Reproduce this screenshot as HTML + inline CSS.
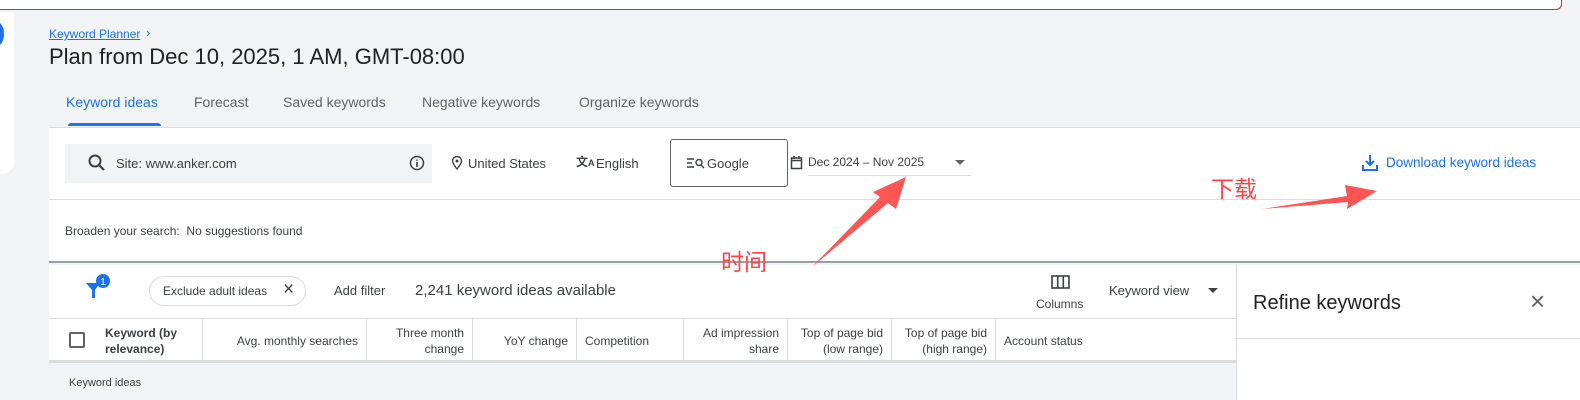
<!DOCTYPE html>
<html><head><meta charset="utf-8"><style>
*{box-sizing:border-box;margin:0;padding:0}
body{width:1580px;height:400px;background:#f1f3f4;font-family:"Liberation Sans",Arial,sans-serif;color:#3c4043;position:relative;overflow:hidden;font-size:13px}
.a{position:absolute;white-space:nowrap}
.th{position:absolute;top:319px;height:44px;border-right:1px solid #dadce0;font-size:12px;line-height:16px;padding:6px 8px;display:flex;align-items:center}
.r{justify-content:flex-end;text-align:right}
</style></head><body>
<div class="a" style="left:0;top:0;width:1562px;height:10px;background:#fff;border-bottom:1px solid #c53929;border-right:1px solid #c53929;border-bottom-right-radius:6px"></div>
<div class="a" style="left:0;top:12px;width:14px;height:162px;background:#fff;border-bottom-right-radius:12px"></div>
<div class="a" style="left:-10px;top:22px;width:14px;height:24px;border-radius:50%;background:#1a73e8"></div>

<div class="a" style="left:49px;top:27px;font-size:12px;color:#1a73e8;text-decoration:underline">Keyword Planner</div>
<div class="a" style="left:146px;top:25px;font-size:13px;color:#1a73e8">›</div>
<div class="a" style="left:49px;top:44px;font-size:22px;color:#202124">Plan from Dec 10, 2025, 1 AM, GMT-08:00</div>
<div class="a" style="left:66px;top:94px;font-size:14px;color:#1a73e8">Keyword ideas</div>
<div class="a" style="left:194px;top:94px;font-size:14px;color:#5f6368">Forecast</div>
<div class="a" style="left:283px;top:94px;font-size:14px;color:#5f6368">Saved keywords</div>
<div class="a" style="left:422px;top:94px;font-size:14px;color:#5f6368">Negative keywords</div>
<div class="a" style="left:579px;top:94px;font-size:14px;color:#5f6368">Organize keywords</div>
<div class="a" style="left:68px;top:123px;width:93px;height:3px;background:#1a73e8;border-radius:3px 3px 0 0"></div>

<div class="a" style="left:49px;top:127px;width:1531px;height:136px;background:#fff;border-top:1px solid #dadce0;border-bottom:2px solid #9aa0a6"></div>
<div class="a" style="left:49px;top:199px;width:1531px;height:1px;background:#dadce0"></div>
<div class="a" style="left:65px;top:144px;width:367px;height:39px;background:#f1f3f4"></div>
<svg class="a" style="left:87px;top:153px" width="20" height="20" viewBox="0 0 20 20"><circle cx="8" cy="8" r="5.5" fill="none" stroke="#3c4043" stroke-width="2"/><path d="M12 12l5 5" stroke="#3c4043" stroke-width="2.2"/></svg>
<div class="a" style="left:116px;top:156px;color:#3c4043">Site: www.anker.com</div>
<svg class="a" style="left:409px;top:155px" width="16" height="16"><circle cx="8" cy="8" r="6.5" fill="none" stroke="#3c4043" stroke-width="1.5"/><path d="M8 7v5M8 4.5v1.2" stroke="#3c4043" stroke-width="1.6"/></svg>
<svg class="a" style="left:451px;top:155px" width="12" height="15"><path d="M6 14C2 9 1.5 7.5 1.5 6a4.5 4.5 0 019 0c0 1.5-.5 3-4.5 8z" fill="none" stroke="#3c4043" stroke-width="1.4"/><circle cx="6" cy="6" r="1.5" fill="#3c4043"/></svg>
<div class="a" style="left:468px;top:156px">United States</div>
<div class="a" style="left:576px;top:155px;font-size:12px;font-weight:bold;font-family:'Noto Sans CJK SC',sans-serif;line-height:14px">文<span style="font-size:9px;font-family:'Liberation Sans'">A</span></div>
<div class="a" style="left:596px;top:156px">English</div>
<div class="a" style="left:670px;top:139px;width:118px;height:48px;border:1px solid #5f6368;border-radius:3px"></div>
<svg class="a" style="left:687px;top:157px" width="18" height="12"><path d="M0 2h7M0 6h5M0 10h7" stroke="#3c4043" stroke-width="1.4"/><circle cx="12" cy="5.5" r="3" fill="none" stroke="#3c4043" stroke-width="1.4"/><path d="M14 8l3 3" stroke="#3c4043" stroke-width="1.4"/></svg>
<div class="a" style="left:707px;top:156px">Google</div>
<svg class="a" style="left:790px;top:155px" width="13" height="15"><rect x="1.5" y="3" width="10" height="10.5" fill="none" stroke="#3c4043" stroke-width="1.5"/><path d="M1.5 5.5h10M4 1v3M9 1v3" stroke="#3c4043" stroke-width="1.5"/></svg>
<div class="a" style="left:808px;top:155px;font-size:12px">Dec 2024 – Nov 2025</div>
<div class="a" style="left:808px;top:175px;width:163px;height:1px;background:#dadce0"></div>
<div class="a" style="left:955px;top:160px;width:0;height:0;border-left:5px solid transparent;border-right:5px solid transparent;border-top:5px solid #5f6368"></div>
<svg class="a" style="left:1361px;top:154px" width="18" height="18"><path d="M9 1v10M5 7l4 4 4-4M2 11v5h14v-5" fill="none" stroke="#1a73e8" stroke-width="2"/></svg>
<div class="a" style="left:1386px;top:155px;color:#1a73e8;font-size:13.5px">Download keyword ideas</div>
<div class="a" style="left:65px;top:224px;font-size:12px">Broaden your search:&nbsp; No suggestions found</div>

<div class="a" style="left:49px;top:265px;width:1187px;height:98px;background:#fff;border-bottom:3px solid #dadce0"></div>
<div class="a" style="left:49px;top:318px;width:1187px;height:1px;background:#dadce0"></div>
<div class="a" style="left:1236px;top:265px;width:344px;height:135px;background:#fff;border-left:1px solid #dadce0"></div>
<div class="a" style="left:1237px;top:338px;width:343px;height:1px;background:#dadce0"></div>
<svg class="a" style="left:84px;top:272px" width="30" height="30"><path d="M2 11h14l-5 7v8h-3v-8z" fill="#1a73e8"/><circle cx="19" cy="9" r="7" fill="#1a73e8"/><text x="19" y="13" font-size="10" fill="#fff" text-anchor="middle" font-family="Liberation Sans">1</text></svg>
<div class="a" style="left:149px;top:276px;width:157px;height:30px;border:1px solid #dadce0;border-radius:15px;padding:7px 0 0 13px;font-size:12px">Exclude adult ideas<span style="position:absolute;left:133px;top:2px;font-size:19px">×</span></div>
<div class="a" style="left:334px;top:283px">Add filter</div>
<div class="a" style="left:415px;top:282px;font-size:15px">2,241 keyword ideas available</div>
<svg class="a" style="left:1051px;top:275px" width="20" height="15"><rect x="1" y="1" width="17" height="12" fill="none" stroke="#3c4043" stroke-width="1.6"/><path d="M6.7 1v12M12.3 1v12" stroke="#3c4043" stroke-width="1.6"/></svg>
<div class="a" style="left:1036px;top:297px;font-size:12px">Columns</div>
<div class="a" style="left:1109px;top:283px">Keyword view</div>
<div class="a" style="left:1208px;top:288px;border-left:5px solid transparent;border-right:5px solid transparent;border-top:5px solid #3c4043"></div>
<div class="a" style="left:1253px;top:292px;font-size:20px;color:#202124">Refine keywords</div>
<div class="a" style="left:1530px;top:288px;font-size:26px;color:#5f6368;line-height:26px">×</div>

<div class="a" style="left:69px;top:332px;width:16px;height:16px;border:2px solid #5f6368;border-radius:2px"></div>
<div class="th" style="left:97px;width:106px;font-weight:bold;color:#3c4043">Keyword (by<br>relevance)</div>
<div class="th r" style="left:203px;width:164px">Avg. monthly searches</div>
<div class="th r" style="left:367px;width:106px">Three month<br>change</div>
<div class="th r" style="left:473px;width:104px">YoY change</div>
<div class="th" style="left:577px;width:107px">Competition</div>
<div class="th r" style="left:684px;width:104px">Ad impression<br>share</div>
<div class="th r" style="left:788px;width:104px">Top of page bid<br>(low range)</div>
<div class="th r" style="left:892px;width:104px">Top of page bid<br>(high range)</div>
<div class="th" style="left:996px;width:120px;border:none">Account status</div>
<div class="a" style="left:69px;top:377px;font-size:11px">Keyword ideas</div>

<div class="a" style="left:721px;top:243px;font-size:23px;color:#f44;font-family:'Noto Sans CJK SC',sans-serif">时间</div>
<div class="a" style="left:1211px;top:170px;font-size:23px;color:#f44;font-family:'Noto Sans CJK SC',sans-serif">下载</div>
<svg class="a" style="left:0;top:0" width="1580" height="400"><path d="M812 267L880 197L873 192L906 177L896 209L888 203Z" fill="#f55"/><path d="M1262 209L1347 196L1345 185L1377 191L1347 209L1348 202Z" fill="#f55"/></svg>
</body></html>
